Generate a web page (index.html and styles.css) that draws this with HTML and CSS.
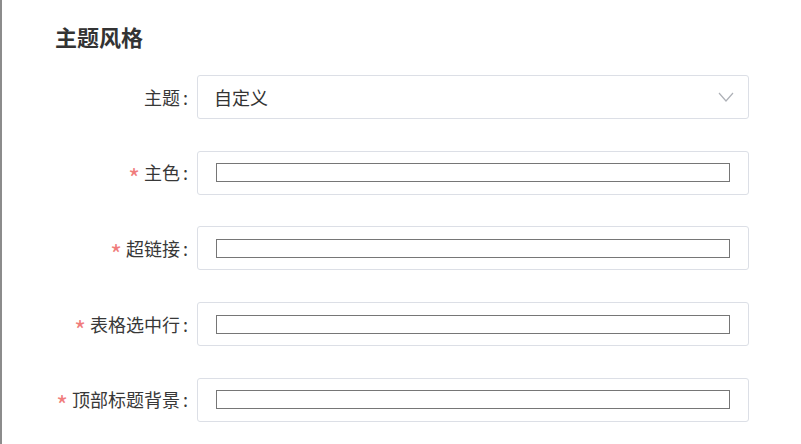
FILE: index.html
```html
<!DOCTYPE html>
<html>
<head>
  <title>主题风格</title>
  <link rel="stylesheet" href="styles.css">
</head>
<body>
  <div class="page">
    <h2 class="section-title">主题风格</h2>
    <div class="form">
      <div class="form-row">
        <label class="form-label">主题<span class="colon">:</span></label>
        <div class="field select">
          <span class="select-value">自定义</span>
          <svg class="select-arrow" width="16" height="12" viewBox="0 0 16 12">
            <polyline points="1,2 8,10 15,2" fill="none" stroke="#aeb1b7" stroke-width="1.2"/>
          </svg>
        </div>
      </div>
      <div class="form-row">
        <label class="form-label"><span class="required">*</span>主色<span class="colon">:</span></label>
        <div class="field"><input class="color-input" type="text"></div>
      </div>
      <div class="form-row">
        <label class="form-label"><span class="required">*</span>超链接<span class="colon">:</span></label>
        <div class="field"><input class="color-input" type="text"></div>
      </div>
      <div class="form-row">
        <label class="form-label"><span class="required">*</span>表格选中行<span class="colon">:</span></label>
        <div class="field"><input class="color-input" type="text"></div>
      </div>
      <div class="form-row">
        <label class="form-label"><span class="required">*</span>顶部标题背景<span class="colon">:</span></label>
        <div class="field"><input class="color-input" type="text"></div>
      </div>
    </div>
  </div>
</body>
</html>
```

FILE: styles.css
```css
body {
  margin: 0;
  padding: 0;
  background-color: #fff;
  font-family: "Noto Sans CJK SC", "Noto Sans", sans-serif;
  color: #333;
  height: 100vh;
  box-sizing: border-box;
  border-left: 2px solid #8c8c8c;
}

.page {
  padding: 21px 0 0 53px;
}

.section-title {
  margin: 0;
  font-size: 22px;
  line-height: 30px;
  font-weight: bold;
  color: #333;
}

.form {
  margin-top: 24px;
}

.form-row {
  display: flex;
  align-items: center;
  height: 44px;
  margin-bottom: 31.7px;
}

.form-label {
  width: 142px;
  padding-right: 9px;
  box-sizing: border-box;
  text-align: right;
  font-size: 18px;
  color: #383838;
  white-space: nowrap;
}

.colon {
  margin-left: 3px;
}

.required {
  color: #f07c7c;
  font-size: 25px;
  line-height: 18px;
  vertical-align: -8px;
  margin-right: 4px;
}

.field {
  width: 552px;
  height: 44px;
  box-sizing: border-box;
  border: 1px solid #dcdfe6;
  border-radius: 3px;
  display: flex;
  align-items: center;
  padding: 0 18px;
}

.select {
  justify-content: space-between;
  padding: 0 14px 0 16px;
}

.select-value {
  font-size: 18px;
  color: #333;
}

.select-arrow {
  display: block;
}

.color-input {
  width: 515px;
  height: 19px;
  box-sizing: border-box;
  border: 1px solid #767676;
  margin: 0;
  padding: 0;
  outline: none;
  background: #fff;
}
```
